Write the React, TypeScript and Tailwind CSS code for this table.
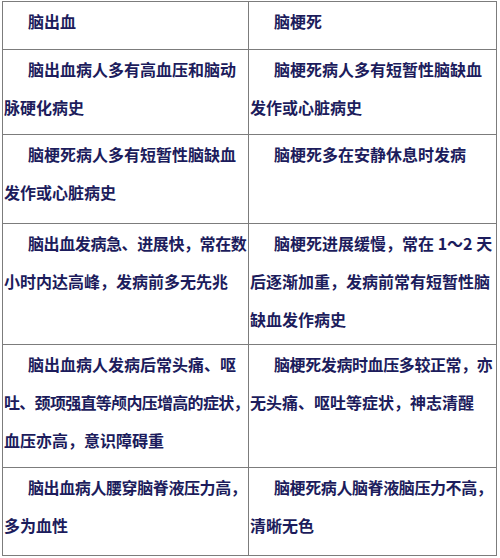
import React from "react";

type Row = { h: string; left: string[]; right: string[] };

const rows: Row[] = [
  { h: "h-[48px]", left: ["脑出血"], right: ["脑梗死"] },
  {
    h: "h-[85px]",
    left: ["脑出血病人多有高血压和脑动", "脉硬化病史"],
    right: ["脑梗死病人多有短暂性脑缺血", "发作或心脏病史"],
  },
  {
    h: "h-[89px]",
    left: ["脑梗死病人多有短暂性脑缺血", "发作或心脏病史"],
    right: ["脑梗死多在安静休息时发病"],
  },
  {
    h: "h-[121px]",
    left: ["脑出血发病急、进展快，常在数", "小时内达高峰，发病前多无先兆"],
    right: ["脑梗死进展缓慢，常在 1～2 天", "后逐渐加重，发病前常有短暂性脑", "缺血发作病史"],
  },
  {
    h: "h-[123px]",
    left: ["脑出血病人发病后常头痛、呕", "吐、颈项强直等颅内压增高的症状，", "血压亦高，意识障碍重"],
    right: ["脑梗死发病时血压多较正常，亦", "无头痛、呕吐等症状，神志清醒"],
  },
  {
    h: "h-[88px]",
    left: ["脑出血病人腰穿脑脊液压力高，", "多为血性"],
    right: ["脑梗死病人脑脊液脑压力不高，", "清晰无色"],
  },
];

function lineClass(l: string, first: boolean): string {
  if (first && l.length >= 14 && !l.includes(" ")) return "pl-[24px] tracking-[-0.4px]";
  if (first) return "pl-[24px]";
  if (l.length >= 16) return "tracking-[-0.7px]";
  return "";
}

function Cell({ lines, w }: { lines: string[]; w: string }) {
  return (
    <div className={`${w} h-full overflow-hidden border-r border-b border-[#7c7c7c] pl-[1px]`}>
      {lines.map((l, i) => (
        <div key={i} className={`whitespace-nowrap leading-[38px] ${lineClass(l, i === 0)}`}>
          {l}
        </div>
      ))}
    </div>
  );
}

export default function App() {
  return (
    <div className="w-[500px] h-[558px] bg-white pt-[1px] pl-[2px] overflow-hidden">
      <div
        className="w-[495px] border-l border-t border-[#7c7c7c] text-[16px] font-bold text-[#1c1c5c]"
        style={{ fontFamily: '"Noto Sans CJK SC", "Noto Sans", sans-serif' }}
      >
        {rows.map((r, i) => (
          <div key={i} className={`flex ${r.h}`}>
            <Cell lines={r.left} w="w-[246px]" />
            <Cell lines={r.right} w="w-[248px]" />
          </div>
        ))}
      </div>
    </div>
  );
}
